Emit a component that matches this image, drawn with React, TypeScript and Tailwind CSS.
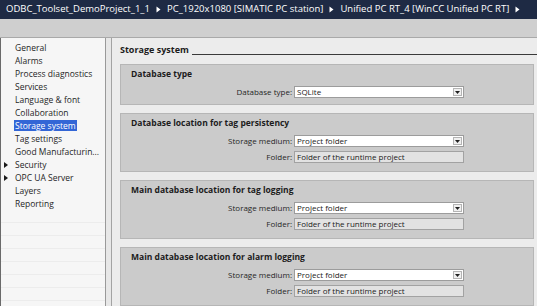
import React from "react";

type NavItem = { label: string; expandable?: boolean; active?: boolean };

const navItems: NavItem[] = [
  { label: "General" },
  { label: "Alarms" },
  { label: "Process diagnostics" },
  { label: "Services" },
  { label: "Language & font" },
  { label: "Collaboration" },
  { label: "Storage system", active: true },
  { label: "Tag settings" },
  { label: "Good Manufacturin..." },
  { label: "Security", expandable: true },
  { label: "OPC UA Server", expandable: true },
  { label: "Layers" },
  { label: "Reporting" },
];

function Crumb() {
  return (
    <svg width="5" height="7" viewBox="0 0 5 7" className="mx-[6px] shrink-0">
      <path d="M0.5 0.5 L4.5 3.5 L0.5 6.5 Z" fill="#ffffff" />
    </svg>
  );
}

function Dropdown({ value }: { value: string }) {
  return (
    <div className="flex h-[12px] w-[170px] items-center border border-[#9c9c9c] bg-white">
      <span className="flex-1 truncate pl-[2px] text-[8px] leading-[10px] text-[#1a1a1a]">{value}</span>
      <div className="mr-px flex h-[8px] w-[9px] items-center justify-center border border-[#b4b4b4] bg-[#f0f0f0]">
        <svg width="5" height="3" viewBox="0 0 5 3">
          <path d="M0 0 H5 L2.5 3 Z" fill="#202020" />
        </svg>
      </div>
    </div>
  );
}

function ReadOnly({ value }: { value: string }) {
  return (
    <div className="flex h-[12px] w-[170px] items-center border border-[#a2a2a2] bg-[#e2e2e2]">
      <span className="pl-[2px] text-[8px] leading-[10px] text-[#1a1a1a]">{value}</span>
    </div>
  );
}

function Field({ label, children, className = "" }: { label: string; children: React.ReactNode; className?: string }) {
  return (
    <div className={`flex items-center ${className}`}>
      <span className="w-[173px] pr-[2px] text-right text-[8px] leading-[12px] text-[#262626]">{label}</span>
      {children}
    </div>
  );
}

function Section({ title, children, pb = "pb-[8px]" }: { title: string; children: React.ReactNode; pb?: string }) {
  return (
    <div className={`mr-[3px] border border-[#b6b6b6] bg-[#cbcbcb] pt-[2px] ${pb}`}>
      <div className="h-[13px] pl-[10px] text-[8.5px] font-bold leading-[13px] text-[#1c1c1c]">{title}</div>
      {children}
    </div>
  );
}

export default function App() {
  return (
    <div className="flex h-[306px] w-[537px] flex-col overflow-hidden bg-[#ececec] font-['Open_Sans',sans-serif]">
      {/* breadcrumb bar */}
      <div className="flex h-[19px] shrink-0 items-center whitespace-nowrap bg-[#1e2a44] pl-[6px] text-[9.5px] text-white">
        <span>ODBC_Toolset_DemoProject_1_1</span>
        <Crumb />
        <span>PC_1920x1080 [SIMATIC PC station]</span>
        <Crumb />
        <span>Unified PC RT_4 [WinCC Unified PC RT]</span>
        <Crumb />
      </div>
      <div className="h-[19px] shrink-0 border-b border-[#a9a9a9] bg-[#cfcfcf]" />

      <div className="flex min-h-0 flex-1">
        {/* left navigation */}
        <div className="w-[106px] shrink-0 border-l border-r border-l-[#6a6a6a] border-r-[#999999] bg-[#f6f6f6] pt-[3px]">
          {navItems.map((item) => (
            <div key={item.label} className="relative flex h-[13px] items-center pl-[13px]">
              {item.expandable && (
                <svg width="4" height="6" viewBox="0 0 4 6" className="absolute left-[3px] top-[3.5px]">
                  <path d="M0 0 L4 3 L0 6 Z" fill="#1a1a1a" />
                </svg>
              )}
              <span
                className={`whitespace-nowrap px-px text-[8.5px] leading-[11px] ${
                  item.active ? "bg-[#3366d6] text-white" : "text-[#1f1f1f]"
                }`}
              >
                {item.label}
              </span>
            </div>
          ))}
          {Array.from({ length: 8 }).map((_, i) => (
            <div key={i} className="h-[13px] border-b border-[#ececec]" />
          ))}
        </div>
        {/* splitter */}
        <div className="w-[6px] shrink-0 border-r border-[#a3a3a3] bg-[#e7e7e7]" />

        {/* content */}
        <div className="min-w-0 flex-1 pl-[8px] pt-[6px]">
          <div className="flex h-[12px] items-end">
            <span className="whitespace-nowrap text-[9px] font-bold leading-[12px] text-[#1c1c1c]">Storage system</span>
            <div className="mb-[1px] ml-[3px] h-px flex-1 bg-[#3a3a3a]" />
          </div>

          <div className="mt-[8px] flex flex-col gap-[8px]">
            <Section title="Database type" pb="pb-[6px]">
              <Field label="Database type:" className="mt-[6px]">
                <Dropdown value="SQLite" />
              </Field>
            </Section>

            <Section title="Database location for tag persistency">
              <Field label="Storage medium:" className="mt-[6px]">
                <Dropdown value="Project folder" />
              </Field>
              <Field label="Folder:" className="mt-[4px]">
                <ReadOnly value="Folder of the runtime project" />
              </Field>
            </Section>

            <Section title="Main database location for tag logging">
              <Field label="Storage medium:" className="mt-[6px]">
                <Dropdown value="Project folder" />
              </Field>
              <Field label="Folder:" className="mt-[4px]">
                <ReadOnly value="Folder of the runtime project" />
              </Field>
            </Section>

            <Section title="Main database location for alarm logging">
              <Field label="Storage medium:" className="mt-[6px]">
                <Dropdown value="Project folder" />
              </Field>
              <Field label="Folder:" className="mt-[4px]">
                <ReadOnly value="Folder of the runtime project" />
              </Field>
            </Section>
          </div>
        </div>
      </div>
    </div>
  );
}
